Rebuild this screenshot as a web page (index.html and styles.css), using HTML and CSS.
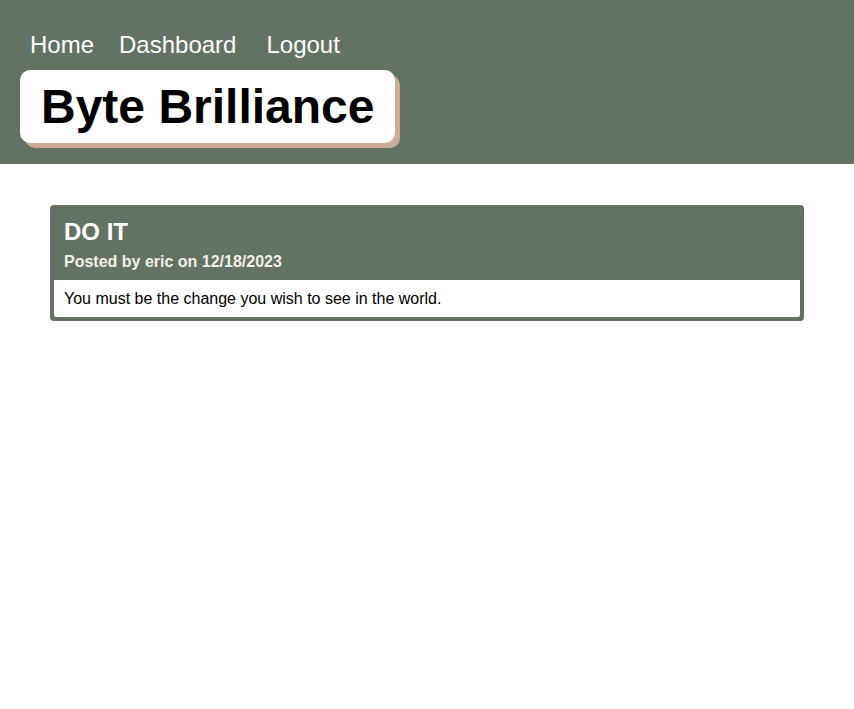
FILE: index.html
```html
<!DOCTYPE html>
<html>
<head>
<meta charset="utf-8">
<link rel="stylesheet" href="styles.css">
</head>
<body>
<header class="site-header">
  <nav class="nav">
    <a class="nav-link" href="#">Home</a>
    <a class="nav-link" href="#">Dashboard</a>
    <a class="nav-link nav-link-last" href="#">Logout</a>
  </nav>
  <h1 class="brand">Byte Brilliance</h1>
</header>
<main class="content">
  <article class="post">
    <div class="post-head">
      <h2 class="post-title">DO IT</h2>
      <p class="post-meta">Posted by eric on 12/18/2023</p>
    </div>
    <div class="post-body">You must be the change you wish to see in the world.</div>
  </article>
</main>
</body>
</html>
```
FILE: styles.css
```css
* { box-sizing: border-box; }
html, body { margin: 0; padding: 0; background: #ffffff; }
body { font-family: "Liberation Sans", Arial, sans-serif; color: #000; }

.site-header {
  background: #637363;
  padding: 30px 20px 21px 20px;
  display: flex;
  flex-direction: column;
  align-items: flex-start;
}

.nav {
  display: flex;
  align-items: baseline;
  padding-left: 10px;
  height: 30px;
}
.nav-link {
  color: #ffffff;
  text-decoration: none;
  font-size: 24px;
  line-height: 30px;
  margin-right: 25px;
}
.nav-link-last { margin-left: 5px; margin-right: 0; }

.brand {
  margin: 10px 0 0 0;
  background: #ffffff;
  border-radius: 10px;
  box-shadow: 5px 5px 0 #cdab98;
  font-size: 48px;
  font-weight: bold;
  line-height: 73px;
  padding: 0 21px;
  height: 73px;
}

.content { padding: 41px 50px; }

.post {
  background: #637363;
  border-radius: 4px;
  padding: 0 4px 4px 4px;
}
.post-head { padding: 13px 10px 9px 10px; color: #ffffff; }
.post-title { margin: 0; font-size: 24px; font-weight: bold; line-height: 28px; }
.post-meta { margin: 7px 0 0 0; font-size: 16px; font-weight: bold; color: #f3eee6; line-height: 18px; }
.post-body {
  background: #ffffff;
  padding: 9px 10px 8px 10px;
  font-size: 16px;
  line-height: 20px;
  border-radius: 0 0 2px 2px;
}
```
